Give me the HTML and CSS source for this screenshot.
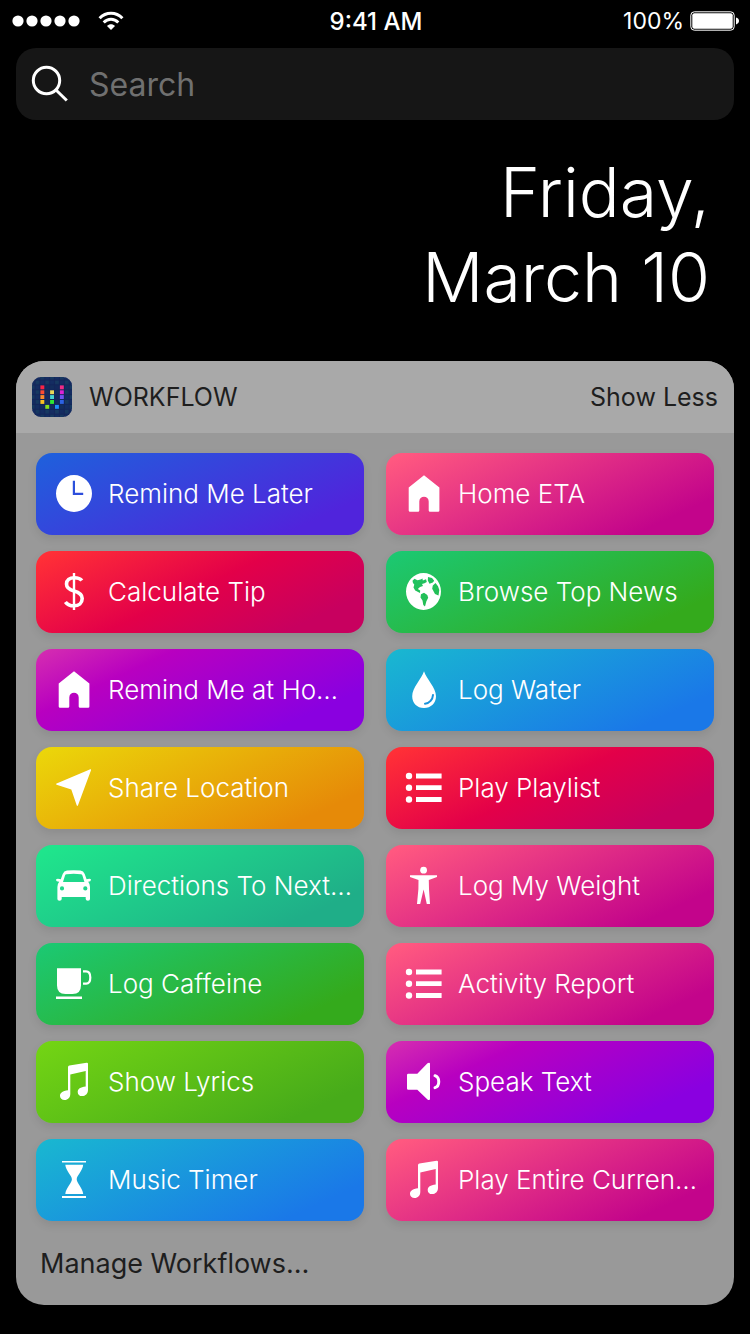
FILE: index.html
```html
<!DOCTYPE html>
<html lang="en">
<head>
<meta charset="utf-8">
<meta name="viewport" content="width=device-width, initial-scale=1">
<title>Workflow widget</title>
<link rel="stylesheet" href="styles.css">
</head>
<body>
<svg class="sprite" aria-hidden="true">
  <symbol id="house" viewBox="0 0 40 40"><path d="M20 2.3 35.4 14.6V37.4q0 1.3-1.3 1.3H26q-1.3 0-1.3-1.3V28.4a4.7 4.7 0 0 0-9.4 0v9q0 1.3-1.3 1.3H6q-1.3 0-1.3-1.3V14.6z"/></symbol>
  <symbol id="list" viewBox="0 0 40 40"><circle cx="5" cy="9" r="3.2"/><circle cx="5" cy="20.7" r="3.2"/><circle cx="5" cy="32.5" r="3.2"/><path d="M12 6.600h25.600v4.800H12zM12 18.300h25.600v4.800H12zM12 30.100h25.600v4.800H12z"/></symbol>
  <symbol id="note" viewBox="0 0 40 40"><path d="M14 6.200q0-1.400 1.400-1.700L32.600 1.800q1.400-.2 1.400 1V29c0 3.600-2.600 6.100-5.800 6.100-2.800 0-4.500-1.800-4.500-4.200 0-3 2.600-4.900 8-5.500V10.100L16.300 13.500V33c0 3.600-2.500 6-5.600 6C7.800 39 6 37.300 6 35c0-3.100 2.600-5 8-5.700z"/></symbol>
</svg>

<header class="status">
  <div class="status-left">
    <svg class="signal" viewBox="0 0 68 12" aria-label="Signal"><circle cx="6" cy="6" r="5.600"/><circle cx="20" cy="6" r="5.600"/><circle cx="34" cy="6" r="5.600"/><circle cx="48" cy="6" r="5.600"/><circle cx="62" cy="6" r="5.600"/></svg>
    <svg class="wifi" viewBox="0 0 26 20" aria-label="Wi-Fi"><path d="M1.600 7.300C8 .6 18 .6 24.400 7.300" /><path d="M5.700 11.500c4.300-4.300 10.300-4.300 14.600 0"/><path class="solid" d="M13 19 9 14.900c2.200-2.300 5.800-2.300 8 0z"/></svg>
  </div>
  <div class="clock">9:41 AM</div>
  <div class="status-right">
    <span>100%</span>
    <svg class="battery" viewBox="0 0 50 20" aria-label="Battery"><rect class="shell" x=".8" y=".8" width="43.400" height="18.400" rx="3.500"/><rect x="2.300" y="2.300" width="40.400" height="15.400" rx="2"/><path d="M46 6.600c4 .8 4 6 0 6.800z"/></svg>
  </div>
</header>

<main class="screen">
  <form class="search" role="search">
    <svg class="search-icon" viewBox="0 0 40 40" aria-hidden="true"><circle cx="16.500" cy="16.500" r="13.200"/><path d="M26 26 36.800 36.500"/></svg>
    <input class="search-input" type="search" placeholder="Search" aria-label="Search">
  </form>

  <h1 class="date">Friday,<br>March 10</h1>

  <section class="card">
    <header class="card-head">
      <svg class="app-icon" viewBox="0 0 40 40" aria-hidden="true">
        <defs><pattern id="cells" x="3.600" y="3.600" width="9.740" height="9.740" patternUnits="userSpaceOnUse"><path fill="#173f63" d="M0 0h3.700v3.700H0zM4.870 4.870h3.700v3.700h-3.700z"/><path fill="#152f65" d="M4.870 0h3.700v3.700h-3.700zM0 4.870h3.700v3.700H0z"/></pattern></defs>
        <rect width="40" height="40" rx="9" fill="#13265a"/>
        <rect width="40" height="40" rx="9" fill="url(#cells)" opacity=".75"/>
        <path fill="#13265a" d="M7.500 7.500h24.800v24.800H7.500z" opacity=".6"/>
        <rect x="8.400" y="8.400" width="3.900" height="3.900" fill="#fb2345"/>
        <rect x="8.400" y="13.300" width="3.900" height="3.900" fill="#fb4a32"/>
        <rect x="8.400" y="18.100" width="3.900" height="3.900" fill="#fb8a2b"/>
        <rect x="8.400" y="23" width="3.900" height="3.900" fill="#fbc021"/>
        <rect x="13.300" y="27.900" width="3.900" height="3.900" fill="#86e01c"/>
        <rect x="18.100" y="13.300" width="3.900" height="3.900" fill="#e9d957"/>
        <rect x="18.100" y="18.100" width="3.900" height="3.900" fill="#45d5d0"/>
        <rect x="18.100" y="23" width="3.900" height="3.900" fill="#2fe832"/>
        <rect x="23" y="27.900" width="3.900" height="3.900" fill="#1c8cfa"/>
        <rect x="27.900" y="8.400" width="3.900" height="3.900" fill="#f02b86"/>
        <rect x="27.900" y="13.300" width="3.900" height="3.900" fill="#df22d4"/>
        <rect x="27.900" y="18.100" width="3.900" height="3.900" fill="#7250f0"/>
        <rect x="27.900" y="23" width="3.900" height="3.900" fill="#2d62e4"/>
      </svg>
      <h2 class="card-title">WORKFLOW</h2>
      <button class="link-button" type="button">Show Less</button>
    </header>

    <div class="grid">
      <button class="tile blue" type="button"><svg class="icon" viewBox="0 0 40 40" aria-hidden="true"><path fill-rule="evenodd" d="M20 2a18 18.500 0 0 1 0 37 18 18.500 0 0 1 0-37zM18.800 7.700V22H29.200V19.800H21V7.700z"/></svg><span>Remind Me Later</span></button>
      <button class="tile pink" type="button"><svg class="icon" aria-hidden="true"><use href="#house"/></svg><span>Home ETA</span></button>

      <button class="tile red" type="button"><svg class="icon" viewBox="0 0 40 40" aria-hidden="true"><path class="line" stroke-width="3.600" d="M27.800 9.600C26.500 7.700 24 6.700 20.300 6.700c-4.800 0-7.800 2.500-7.800 6.300 0 4.200 3.200 5.800 7.500 7 4.800 1.300 8.200 3 8.200 7.500 0 4.500-3.400 7.300-8.200 7.300-4 0-6.800-1.300-8.600-3.900"/><path class="line" stroke-width="2.400" d="M20 2v37"/></svg><span>Calculate Tip</span></button>
      <button class="tile green" type="button"><svg class="icon" viewBox="0 0 40 40" aria-hidden="true"><path fill-rule="evenodd" d="M19.500 2a17.500 18.500 0 0 1 0 37 17.500 18.500 0 0 1 0-37zM8.500 9.700 10.500 7.800 13.500 9.200 16.500 8.600 18.500 7.500 18.800 9.600 22 8.300 22.800 11 20.500 12.300 18 13.100 19 15 16 16 13.800 18 16.200 19.500 16 22 11.200 19.500 9.500 16.500 10.300 13.500 9 12zM17 23.300 20 21.800 23.300 24 24.200 26.800 22.400 30.300 21 35.600 19.300 34 18.500 29.500 16.500 26.500zM24 6 28 7 30.200 9.700 28.800 11.500 25.500 12.700 23.800 9.500zM28.800 14.500 31.500 12 34 15.300 35.300 19 34.500 24.500 31 23 28.200 17.800z"/></svg><span>Browse Top News</span></button>

      <button class="tile purple" type="button"><svg class="icon" aria-hidden="true"><use href="#house"/></svg><span>Remind Me at Ho…</span></button>
      <button class="tile azure" type="button"><svg class="icon" viewBox="0 0 40 40" aria-hidden="true"><path d="M20 2.200C22.500 10 32 18.500 32 27.200 32 34 27 39 20 39S8.200 34 8.200 27.200C8.200 18.500 17.500 10 20 2.200z"/><path class="cut" d="M29 26c-.3 4.500-3.500 8.400-8 8.700"/></svg><span>Log Water</span></button>

      <button class="tile yellow" type="button"><svg class="icon" viewBox="0 0 40 40" aria-hidden="true"><path d="M36.300 2.300q1.100-.2.700 1L24 38.300q-.7 1.300-1.300 0L17.300 22.500 2.600 17.700q-1.200-.6 0-1.200z"/></svg><span>Share Location</span></button>
      <button class="tile red" type="button"><svg class="icon" aria-hidden="true"><use href="#list"/></svg><span>Play Playlist</span></button>

      <button class="tile teal" type="button"><svg class="icon" viewBox="0 0 40 40" aria-hidden="true"><path fill-rule="evenodd" d="M13 5.600Q19.700 4.800 26.400 5.600 29.500 6 30.700 9L32.600 14.200Q36.900 13 37 14.800 37 16.600 34.200 16.800 36 19 36 22V34Q36 35.800 33.900 35.800T31.700 34V32H7.700V34Q7.700 35.800 5.500 35.800T3.400 34V22Q3.400 19 5.200 16.800 2 16.600 2 14.800 2.500 13 6.800 14.200L8.700 9Q9.900 6 13 5.600zM12.500 9.200Q11.400 9.300 11 10.500L9 16.900H30.400L28.400 10.500Q28 9.300 26.900 9.200 19.700 8.500 12.500 9.200zM8 21.300a2.100 2.100 0 0 0 0 4.200 2.100 2.100 0 0 0 0-4.200zM31.300 21.300a2.100 2.100 0 0 0 0 4.200 2.100 2.100 0 0 0 0-4.200z"/></svg><span>Directions To Next…</span></button>
      <button class="tile pink" type="button"><svg class="icon" viewBox="0 0 40 40" aria-hidden="true"><circle cx="19.600" cy="5.200" r="3.400"/><path d="M6 10.200H33V12L24.800 15 25 24 26 39H22.800L19.600 24.500 16.200 39H13L14.400 24 14.500 15 6 12z"/></svg><span>Log My Weight</span></button>

      <button class="tile green" type="button"><svg class="icon" viewBox="0 0 40 40" aria-hidden="true"><path d="M3 5.300H27V22.500Q27 31 18.500 31H11.500Q3 31 3 22.500zM2 33.400H28V35.900H2z"/><path class="line" stroke-width="2.200" d="M29 8.300H32Q36.300 8.300 36.300 14.500T32 20.600H29"/></svg><span>Log Caffeine</span></button>
      <button class="tile pink" type="button"><svg class="icon" aria-hidden="true"><use href="#list"/></svg><span>Activity Report</span></button>

      <button class="tile lime" type="button"><svg class="icon" aria-hidden="true"><use href="#note"/></svg><span>Show Lyrics</span></button>
      <button class="tile purple" type="button"><svg class="icon" viewBox="0 0 40 40" aria-hidden="true"><path d="M3 14Q3 12.700 4.300 12.700H13.300L23.500 2.300Q24.200 1.700 25 1.700 26 1.700 26 2.700V38Q26 39 25 39 24.200 39 23.500 38.400L13.300 28.700H4.300Q3 28.700 3 27.400z"/><path class="line" stroke-width="3" stroke-linecap="round" d="M31 14.700c5 1.700 5 10.300 0 12"/></svg><span>Speak Text</span></button>

      <button class="tile azure" type="button"><svg class="icon" viewBox="0 0 40 40" aria-hidden="true"><path d="M8 1.900H32V3.500H8zM8 37.100H32V39H8zM11.300 5.800H29.200C28.700 12 22.700 16.500 22.700 20.300S28.700 29 29.200 35H11.300C11.800 29 17.900 24 17.900 20.300S11.800 12 11.300 5.800z"/></svg><span>Music Timer</span></button>
      <button class="tile pink" type="button"><svg class="icon" aria-hidden="true"><use href="#note"/></svg><span>Play Entire Curren…</span></button>
    </div>

    <footer class="card-foot">
      <button class="link-button" type="button">Manage Workflows…</button>
    </footer>
  </section>
</main>
</body>
</html>
```
FILE: styles.css
```css
* {
  box-sizing: border-box;
}

body {
  margin: 0;
  background: #000;
  color: #fff;
  font-family: Inter, "Liberation Sans", sans-serif;
  font-size: 25px;
}

button,
input {
  margin: 0;
  border: 0;
  padding: 0;
  background: none;
  color: inherit;
  font: inherit;
}

svg {
  display: block;
  flex: none;
  fill: #fff;
}

.sprite {
  position: absolute;
  width: 0;
  height: 0;
}

.status {
  display: grid;
  grid-template-columns: 1fr auto 1fr;
  align-items: center;
  height: 42px;
  padding: 0 10px 0 12px;
  font-size: 24px;
}

.status-left,
.status-right {
  display: flex;
  align-items: center;
}

.status-left {
  gap: 18px;
}

.status-right {
  justify-content: flex-end;
  gap: 6px;
  font-size: 23px;
}

.clock {
  font-weight: 500;
}

.signal {
  width: 68px;
  height: 12px;
}

.wifi {
  width: 26px;
  height: 20px;
}

.wifi path {
  fill: none;
  stroke: #fff;
  stroke-width: 3;
}

.wifi .solid {
  fill: #fff;
  stroke: none;
}

.battery {
  width: 50px;
  height: 20px;
}

.battery .shell {
  fill: none;
  stroke: #fff;
  stroke-width: 1;
}

.screen {
  padding: 6px 16px 28px;
}

.search {
  display: flex;
  align-items: center;
  gap: 19px;
  height: 72px;
  padding: 0 14px;
  border-radius: 20px;
  background: #161616;
}

.search-icon {
  width: 40px;
  height: 40px;
  fill: none;
  stroke: #fff;
  stroke-width: 3;
}

.search-input {
  flex: 1;
  min-width: 0;
  outline: none;
  appearance: none;
  font-size: 32px;
}

.search-input::placeholder {
  color: #707070;
  opacity: 1;
}

.date {
  margin: 0;
  padding: 30px 24px 41px;
  font-size: 68px;
  font-weight: 300;
  line-height: 85px;
  text-align: right;
}

.card {
  overflow: hidden;
  border-radius: 28px;
  background: #999;
  color: #1e1e1e;
}

.card-head {
  display: flex;
  align-items: center;
  gap: 17px;
  height: 72px;
  padding: 0 16px;
  background: #a9a9a9;
}

.app-icon {
  width: 40px;
  height: 40px;
}

.card-title {
  flex: 1;
  margin: 0;
  font-size: 25px;
  font-weight: 400;
}

.grid {
  display: grid;
  grid-template-columns: 1fr 1fr;
  gap: 16px 22px;
  padding: 20px 20px 0;
}

.tile {
  display: flex;
  align-items: center;
  gap: 14px;
  min-width: 0;
  height: 82px;
  padding: 0 10px 2px 18px;
  border-radius: 16px;
  box-shadow: 0 4px 10px rgba(0, 0, 0, 0.09);
  color: #fff;
  font-size: 26px;
  font-weight: 300;
  text-align: left;
  white-space: nowrap;
}

.icon {
  width: 40px;
  height: 40px;
}

.icon .line {
  fill: none;
  stroke: #fff;
}

.icon .cut {
  fill: none;
  stroke: #1993dc;
  stroke-width: 2;
  stroke-linecap: round;
}

.blue {
  background: linear-gradient(155deg, #1e61dc, #5024dc 84%);
}

.pink {
  background: linear-gradient(155deg, #ff5880 4%, #c3048b 84%);
}

.red {
  background: linear-gradient(155deg, #ff2f37 4%, #e30049 48%, #c8005f 84%);
}

.green {
  background: linear-gradient(155deg, #1bc974, #34aa1c 84%);
}

.purple {
  background: linear-gradient(155deg, #d62fb0, #b800c0 28%, #8a00e0 82%);
}

.azure {
  background: linear-gradient(155deg, #19b8d0, #1a78e8 84%);
}

.yellow {
  background: linear-gradient(155deg, #ebd80a, #e68a08 84%);
}

.teal {
  background: linear-gradient(155deg, #1fe58c 4%, #1fae88 84%);
}

.lime {
  background: linear-gradient(155deg, #74d514, #47ab1a 84%);
}

.card-foot {
  display: flex;
  align-items: center;
  height: 84px;
  padding: 0 24px;
  font-size: 27px;
}
```
